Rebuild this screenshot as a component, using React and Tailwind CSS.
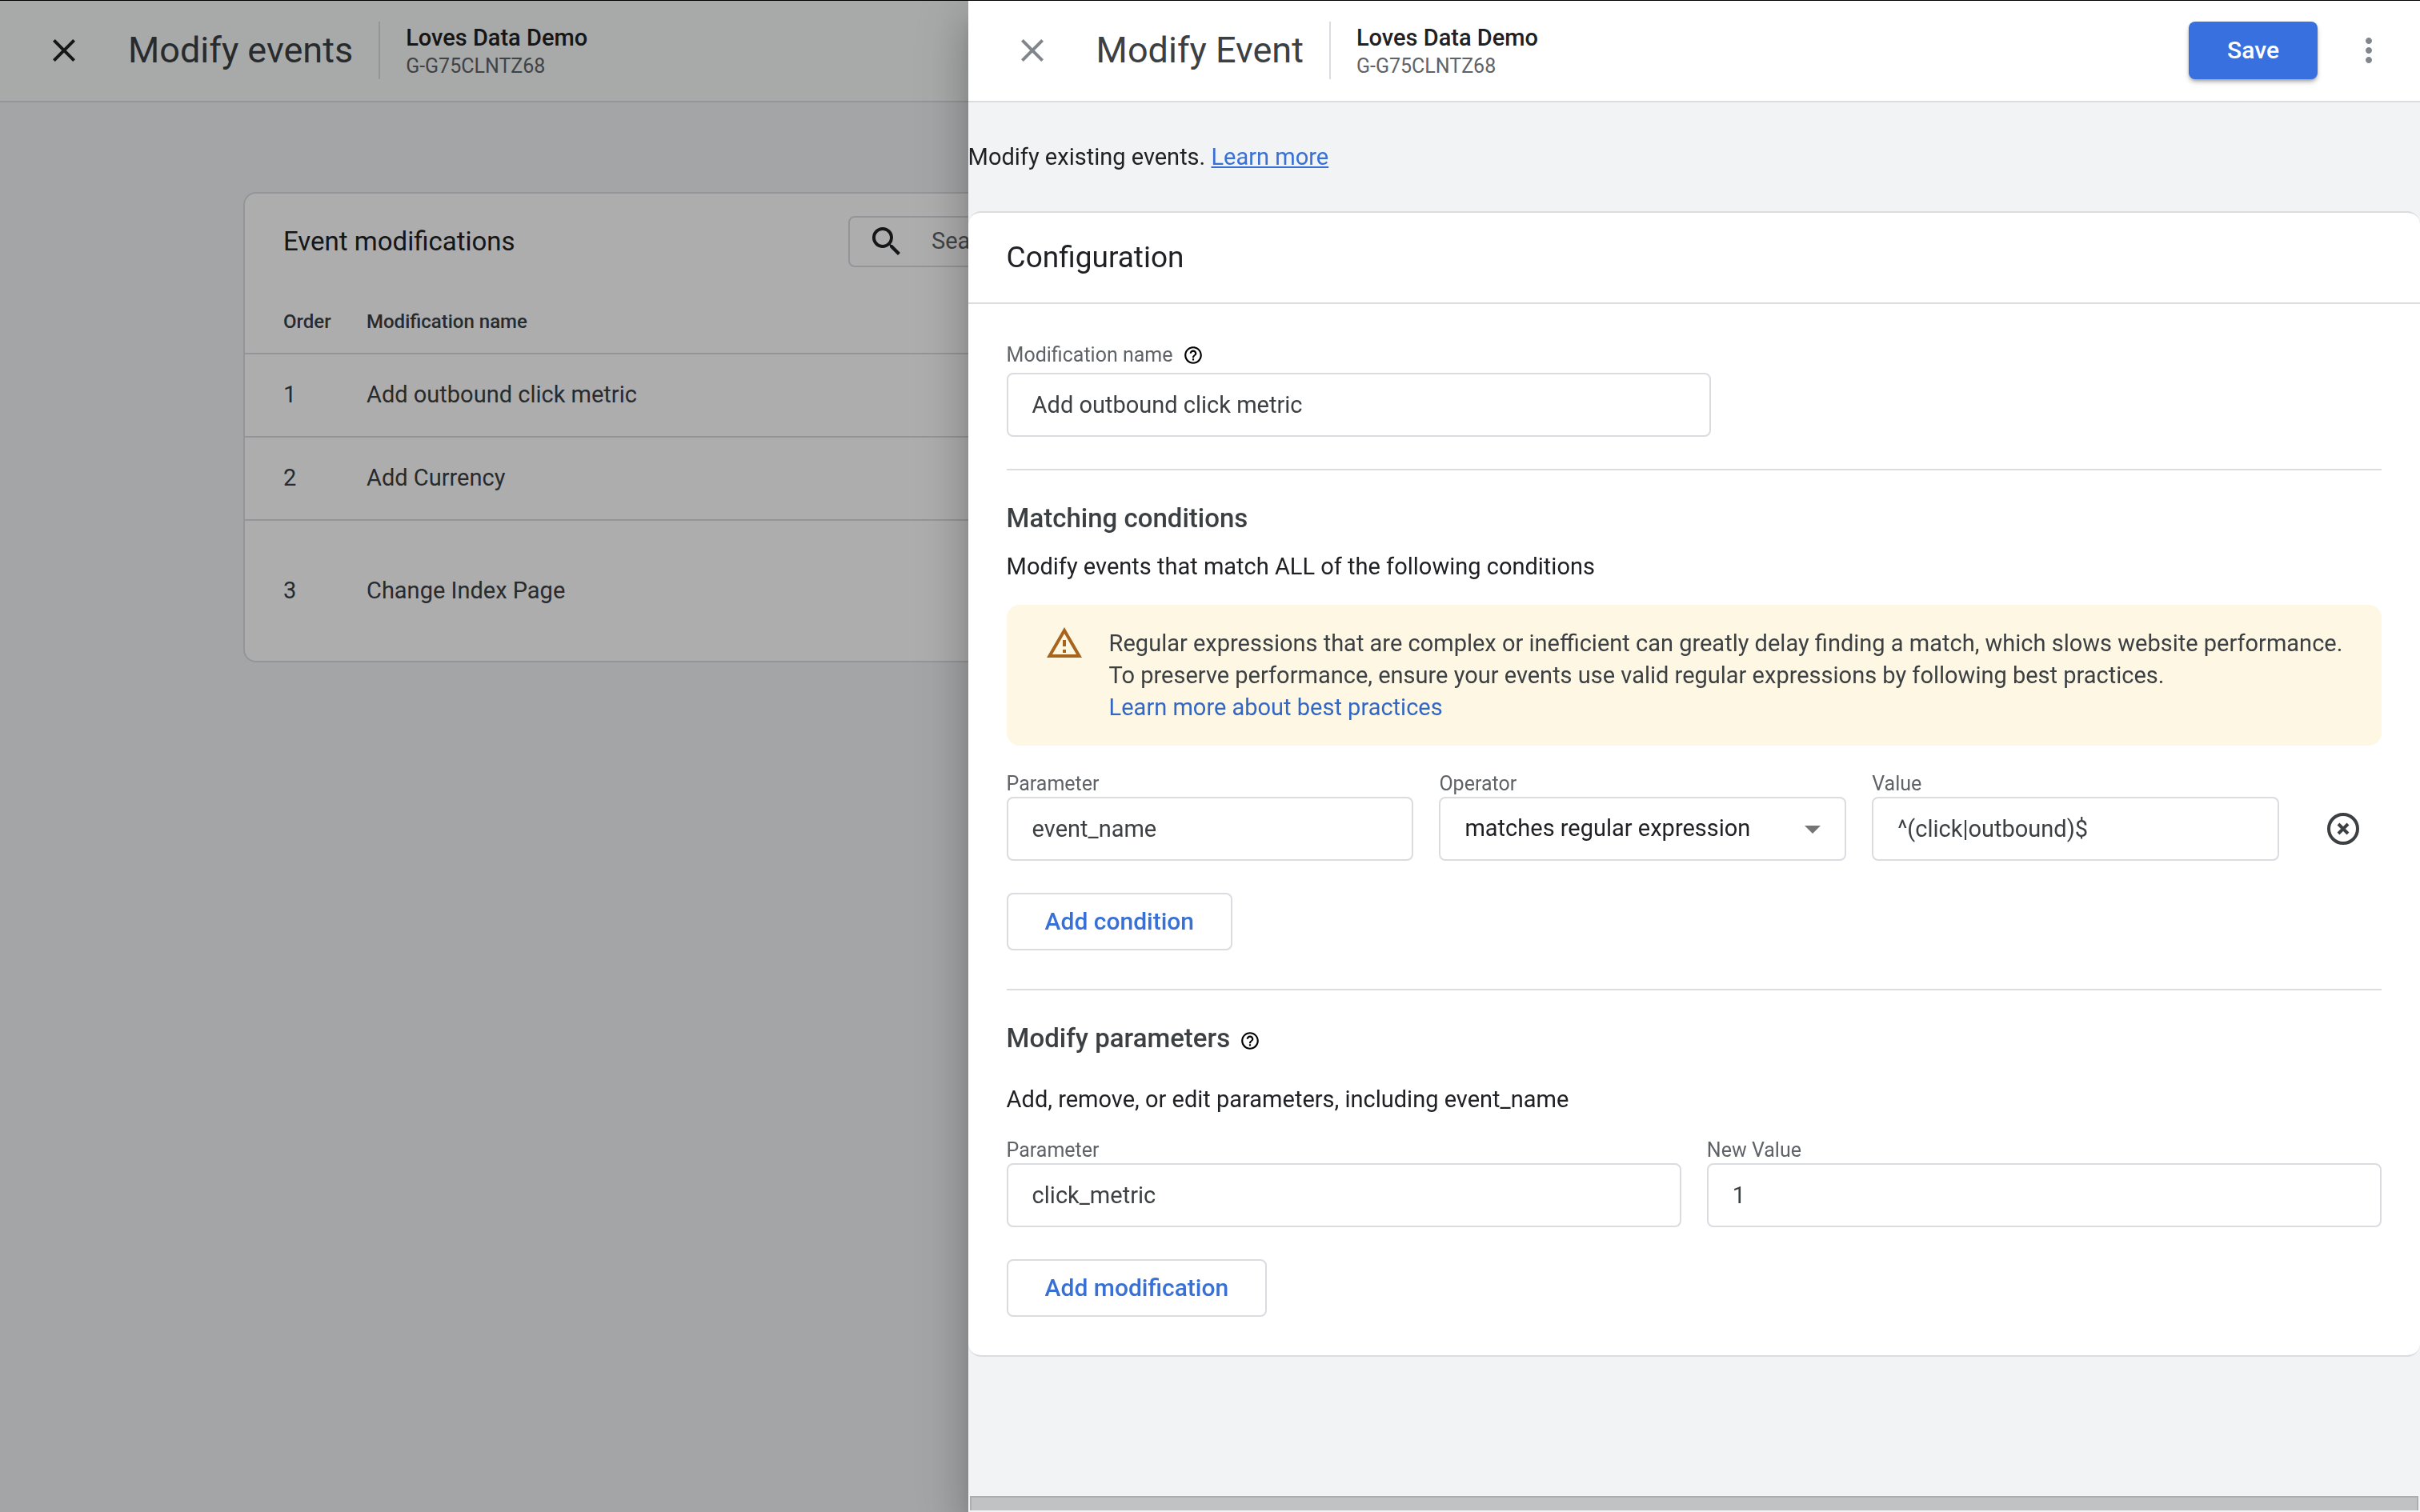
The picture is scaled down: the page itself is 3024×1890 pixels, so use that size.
import React, { useState } from "react";
import { MdClose, MdSearch, MdMoreVert, MdHelpOutline, MdArrowDropDown } from "react-icons/md";

const modifications = [
  { order: 1, name: "Add outbound click metric" },
  { order: 2, name: "Add Currency" },
  { order: 3, name: "Change Index Page", tall: true },
];

const operators = ["equals", "contains", "starts with", "ends with", "matches regular expression"];

const WarningIcon = () => (
  <svg viewBox="0 0 24 24" className="size-12 shrink-0" fill="#a8641c" aria-hidden="true">
    <path d="M12 5.99 19.53 19H4.47L12 5.99M12 2 1 21h22L12 2z" />
    <path d="M13 16h-2v2h2zM13 10h-2v4h2z" />
  </svg>
);

const RemoveIcon = () => (
  <svg viewBox="0 0 24 24" className="size-12" fill="none" stroke="#3c4043" strokeWidth="2" aria-hidden="true">
    <circle cx="12" cy="12" r="9" />
    <path d="m9 9 6 6M15 9l-6 6" />
  </svg>
);

const TopBar = ({ title, className, closeClass, children }) => (
  <header className={`flex items-center border-b-2 border-[#dadce0] pt-[26px] pr-10 pb-[27px] pl-14 ${className}`}>
    <button type="button" aria-label="Close" className={closeClass}>
      <MdClose className="size-12" />
    </button>
    <h1 className="ml-14 text-[45px] leading-[48px] text-[#3c4043]">{title}</h1>
    <div className="ml-8 flex h-18 flex-col justify-center border-l-2 border-[#dadce0] pl-8">
      <span className="text-[29px] leading-10 font-medium text-[#202124]">Loves Data Demo</span>
      <span className="text-[25px] leading-8 text-[#5f6368]">G-G75CLNTZ68</span>
    </div>
    {children}
  </header>
);

const TextField = ({ id, label, value, onChange }) => (
  <div className="flex flex-col">
    <label htmlFor={id} className="text-[25px] leading-8 text-[#5f6368]">
      {label}
    </label>
    <input
      id={id}
      type="text"
      value={value}
      onChange={(e) => onChange(e.target.value)}
      className="h-20 w-full rounded-lg border-2 border-[#dadce0] bg-white px-[30px] text-[29px] text-[#3c4043] outline-none focus:border-[#3870e0]"
    />
  </div>
);

const OutlineButton = ({ children }) => (
  <button
    type="button"
    className="mt-10 h-18 rounded-lg border-2 border-[#dadce0] px-[46px] text-3xl font-medium text-[#3870d5] hover:bg-blue-50"
  >
    {children}
  </button>
);

const EventsPage = () => (
  <div className="min-h-screen bg-[#f1f3f5]">
    <TopBar title="Modify events" className="bg-[#f8f9fa]" closeClass="text-[#202124]" />
    <section className="mx-auto mt-28 w-[2416px] max-w-full rounded-2xl border-2 border-[#dadce0] bg-white">
      <div className="flex h-30 items-center px-12">
        <h2 className="w-[706px] shrink-0 text-[33px] text-[#202124]">Event modifications</h2>
        <label className="flex h-16 flex-1 items-center rounded-lg border-2 border-[#dadce0] pl-[22px]">
          <MdSearch className="size-12 shrink-0 text-[#202124]" />
          <input
            type="search"
            placeholder="Search"
            aria-label="Search modifications"
            className="ml-8 flex-1 text-[29px] outline-none placeholder:text-[#5f6368]"
          />
        </label>
      </div>
      <table className="w-full text-left text-[#3c4043]">
        <thead>
          <tr className="h-20 text-2xl">
            <th className="w-[152px] pl-12 font-medium">Order</th>
            <th className="font-medium">Modification name</th>
          </tr>
        </thead>
        <tbody className="text-[29px]">
          {modifications.map((m) => (
            <tr key={m.order} className={`border-t-2 border-[#dadce0] ${m.tall ? "h-44" : "h-26"}`}>
              <td className="pl-12">{m.order}</td>
              <td>{m.name}</td>
            </tr>
          ))}
        </tbody>
      </table>
    </section>
  </div>
);

const ModifyEventPanel = () => {
  const [name, setName] = useState("Add outbound click metric");
  const [condition, setCondition] = useState({
    parameter: "event_name",
    operator: "matches regular expression",
    value: "^(click|outbound)$",
  });
  const [change, setChange] = useState({ parameter: "click_metric", value: "1" });

  return (
    <aside className="fixed top-px right-0 bottom-0 flex w-3/5 flex-col bg-[#f1f3f4] shadow-[0_16px_20px_-10px_rgba(0,0,0,0.2),0_32px_48px_4px_rgba(0,0,0,0.14),0_12px_60px_10px_rgba(0,0,0,0.12)]">
      <TopBar title="Modify Event" className="bg-white" closeClass="text-[#80868b]">
        <button
          type="button"
          className="ml-auto h-18 rounded-lg bg-[#3870e0] px-12 text-3xl font-medium text-white shadow-md shadow-black/30"
        >
          Save
        </button>
        <button type="button" aria-label="More options" className="ml-10 text-[#80868b]">
          <MdMoreVert className="size-12" />
        </button>
      </TopBar>

      <main className="flex-1 text-[29px] text-[#202124]">
        <p className="py-12 leading-10">
          Modify existing events.{" "}
          <a href="#learn-more" className="text-[#3870d5] underline">
            Learn more
          </a>
        </p>

        <section className="rounded-2xl border-y-2 border-[#dadce0] bg-white">
          <h2 className="border-b-2 border-[#dadce0] px-12 py-9 text-[37px] leading-10">Configuration</h2>

          <div className="p-12">
            {/* Name */}
            <div className="mb-1.5 flex items-center gap-3">
              <label htmlFor="modification-name" className="text-[25px] leading-8 text-[#5f6368]">
                Modification name
              </label>
              <MdHelpOutline className="size-[26px] text-black" />
            </div>
            <input
              id="modification-name"
              type="text"
              value={name}
              onChange={(e) => setName(e.target.value)}
              className="block h-20 w-[880px] rounded-lg border-2 border-[#dadce0] bg-white px-[30px] text-[29px] text-[#3c4043] outline-none focus:border-[#3870e0]"
            />

            {/* Conditions */}
            <div className="mt-10 border-t-2 border-[#dadce0] pt-10">
              <h3 className="text-[33px] leading-10 font-medium text-[#3c4043]">Matching conditions</h3>
              <p className="mt-5 leading-10">Modify events that match ALL of the following conditions</p>
              <div className="mt-7 flex gap-8 rounded-2xl bg-[#fdf7e3] py-7 pr-8 pl-12 text-[#3c4043]">
                <span className="flex h-10 items-center">
                  <WarningIcon />
                </span>
                <p className="leading-10">
                  Regular expressions that are complex or inefficient can greatly delay finding a match, which slows
                  website performance.
                  <br />
                  To preserve performance, ensure your events use valid regular expressions by following best practices.
                  <br />
                  <a href="#best-practices" className="text-[#3367c4]">
                    Learn more about best practices
                  </a>
                </p>
              </div>

              <div className="mt-8 grid grid-cols-[1fr_1fr_1fr_96px] gap-x-8">
                <TextField
                  id="condition-parameter"
                  label="Parameter"
                  value={condition.parameter}
                  onChange={(parameter) => setCondition({ ...condition, parameter })}
                />
                <div className="flex flex-col">
                  <label htmlFor="condition-operator" className="text-[25px] leading-8 text-[#5f6368]">
                    Operator
                  </label>
                  <div className="relative">
                    <select
                      id="condition-operator"
                      value={condition.operator}
                      onChange={(e) => setCondition({ ...condition, operator: e.target.value })}
                      className="h-20 w-full appearance-none rounded-lg border-2 border-[#dadce0] bg-white px-[30px] text-[29px] outline-none"
                    >
                      {operators.map((op) => (
                        <option key={op}>{op}</option>
                      ))}
                    </select>
                    <MdArrowDropDown className="pointer-events-none absolute top-4 right-[18px] size-12 text-[#757575]" />
                  </div>
                </div>
                <TextField
                  id="condition-value"
                  label="Value"
                  value={condition.value}
                  onChange={(value) => setCondition({ ...condition, value })}
                />
                <button type="button" aria-label="Remove condition" className="mt-8 flex items-center justify-center">
                  <RemoveIcon />
                </button>
              </div>
              <OutlineButton>Add condition</OutlineButton>
            </div>

            {/* Parameters */}
            <div className="mt-12 border-t-2 border-[#dadce0] pt-10">
              <h3 className="flex items-end gap-3 text-[33px] leading-10 font-medium text-[#3c4043]">
                Modify parameters
                <MdHelpOutline className="mb-1 size-[26px] text-black" />
              </h3>
              <p className="mt-9 leading-10">Add, remove, or edit parameters, including event_name</p>
              <div className="mt-7 grid grid-cols-2 gap-x-8">
                <TextField
                  id="change-parameter"
                  label="Parameter"
                  value={change.parameter}
                  onChange={(parameter) => setChange({ ...change, parameter })}
                />
                <TextField
                  id="change-value"
                  label="New Value"
                  value={change.value}
                  onChange={(value) => setChange({ ...change, value })}
                />
              </div>
              <OutlineButton>Add modification</OutlineButton>
            </div>
          </div>
        </section>
      </main>

      {/* Horizontal scroll track */}
      <div className="mx-0.5 mb-0.5 h-[18px] border-2 border-b-0 border-[#acaeb0] bg-[#c1c2c4]" />
    </aside>
  );
};

const App = () => (
  <div className="border-t border-black bg-black font-['Roboto',sans-serif]">
    <EventsPage />
    <div className="fixed inset-x-0 top-px bottom-0 bg-black/32" />
    <ModifyEventPanel />
  </div>
);

export default App;
